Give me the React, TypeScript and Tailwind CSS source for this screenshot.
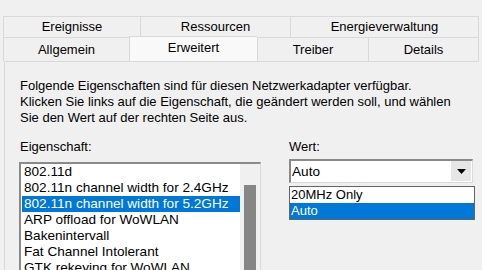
import React from 'react';

const items = [
  '802.11d',
  '802.11n channel width for 2.4GHz',
  '802.11n channel width for 5.2GHz',
  'ARP offload for WoWLAN',
  'Bakenintervall',
  'Fat Channel Intolerant',
  'GTK rekeying for WoWLAN',
];

function Tab({ label, w, active }: { label: string; w: string; active?: boolean }) {
  return (
    <div
      className={`${w} flex items-center justify-center border-l border-t border-[#d9d9d9] ${
        active ? 'relative -mt-[1px] bg-[#f9f9f9] pb-[3px]' : 'bg-[#f0f0f0]'
      }`}
    >
      {label}
    </div>
  );
}

export default function App() {
  return (
    <div
      className="h-[270px] w-[482px] overflow-hidden bg-[#f0f0f0] text-[13px] leading-[16px] text-black"
      style={{ fontFamily: '"Liberation Sans", Arial, sans-serif' }}
    >
      <div className="px-[3px] pt-[16px]">
        {/* upper tab row */}
        <div className="flex h-[21px] border-r border-[#d9d9d9]">
          <Tab label="Ereignisse" w="w-[137px]" />
          <Tab label="Ressourcen" w="w-[150px]" />
          <Tab label="Energieverwaltung" w="flex-1" />
        </div>
        {/* lower tab row */}
        <div className="flex h-[24px] border-r border-[#d9d9d9]">
          <Tab label="Allgemein" w="w-[126px]" />
          <Tab label="Erweitert" w="w-[128px]" active />
          <Tab label="Treiber" w="w-[111px]" />
          <Tab label="Details" w="flex-1" />
        </div>

        {/* page */}
        <div className="ml-[1px] h-[220px] border-l border-t border-[#d9d9d9] bg-[#f0f0f0] pl-[15px] pt-[16px]">
          <p>
            Folgende Eigenschaften sind für diesen Netzwerkadapter verfügbar.
            <br />
            Klicken Sie links auf die Eigenschaft, die geändert werden soll, und wählen
            <br />
            Sie den Wert auf der rechten Seite aus.
          </p>

          <div className="mt-[13px] flex">
            <div className="w-[241px]">
              <div>Eigenschaft:</div>
              <div className="-ml-[1px] mt-[7px] flex h-[120px] border-l-2 border-t-2 border-r border-[#8a8a8a] border-r-[#dadada] bg-white">
                <div className="flex-1 pl-[1px] text-[13.6px]">
                  {items.map((it, i) => (
                    <div
                      key={it}
                      className={`h-[16px] whitespace-nowrap pl-[2px] ${
                        i === 2 ? 'bg-[#0078d7] text-white' : ''
                      }`}
                    >
                      {it}
                    </div>
                  ))}
                </div>
                <div className="w-[20px] bg-[#f0f0f0] pl-[4px] pt-[21px]">
                  <div className="h-full w-[12px] bg-[#868686]" />
                </div>
              </div>
            </div>

            <div className="ml-[28px] w-[186px]">
              <div>Wert:</div>
              <div className="mt-[4px] flex h-[24px] w-[184px] border-l-2 border-t-2 border-[#8a8a8a] border-b border-r border-b-[#dadada] border-r-[#dadada] bg-white">
                <div className="flex flex-1 items-center pl-[1px] text-[13.6px]">Auto</div>
                <div className="mb-[1px] mr-[1px] flex w-[20px] items-center justify-center bg-[#e6e6e6]">
                  <svg width="9" height="5" viewBox="0 0 9 5">
                    <path d="M0 0h9L4.5 5z" fill="#000" />
                  </svg>
                </div>
              </div>
              <div className="mt-[3px] w-[186px] border border-[#646464] bg-white">
                <div className="h-[16px] pl-[1px]">20MHz Only</div>
                <div className="h-[16px] bg-[#0078d7] pl-[1px] text-white">Auto</div>
              </div>
            </div>
          </div>
        </div>
      </div>
    </div>
  );
}
